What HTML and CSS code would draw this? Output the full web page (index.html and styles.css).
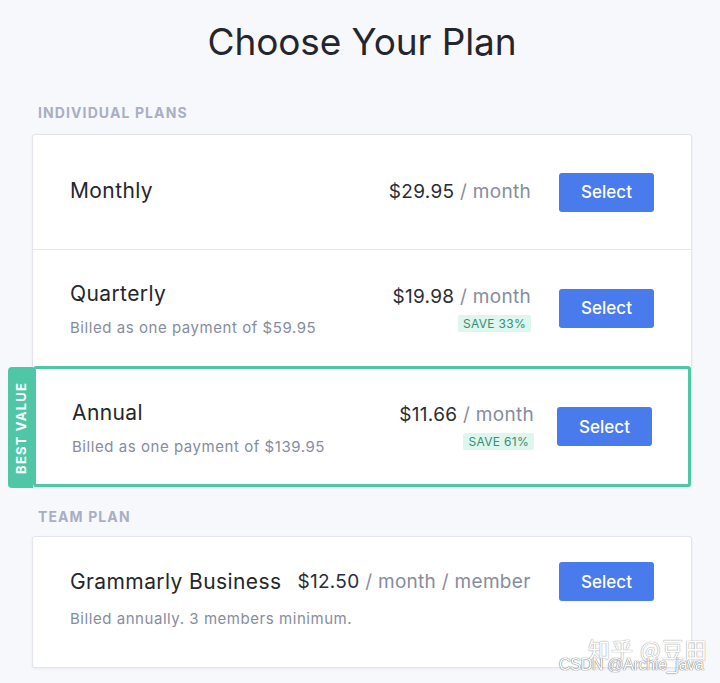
FILE: index.html
```html
<!DOCTYPE html>
<html lang="en">
<head>
<meta charset="utf-8">
<title>Choose Your Plan</title>
<link rel="stylesheet" href="styles.css">
</head>
<body>
<div class="page">
  <h1 class="title">Choose Your Plan</h1>

  <div class="section-label">INDIVIDUAL PLANS</div>
  <div class="card">
    <div class="row row-monthly">
      <div class="info">
        <div class="plan-name">Monthly</div>
      </div>
      <div class="price-col">
        <div class="price"><span class="amount">$29.95</span> <span class="unit">/ month</span></div>
      </div>
      <button class="select">Select</button>
    </div>
    <div class="row row-quarterly">
      <div class="info info-sub">
        <div class="plan-name">Quarterly</div>
        <div class="plan-sub">Billed as one payment of $59.95</div>
      </div>
      <div class="price-col">
        <div class="price"><span class="amount">$19.98</span> <span class="unit">/ month</span></div>
        <div class="badge">SAVE 33%</div>
      </div>
      <button class="select">Select</button>
    </div>
    <div class="row row-annual">
      <div class="best-tab"><span>BEST VALUE</span></div>
      <div class="info info-sub">
        <div class="plan-name">Annual</div>
        <div class="plan-sub">Billed as one payment of $139.95</div>
      </div>
      <div class="price-col">
        <div class="price"><span class="amount">$11.66</span> <span class="unit">/ month</span></div>
        <div class="badge">SAVE 61%</div>
      </div>
      <button class="select">Select</button>
    </div>
  </div>

  <div class="section-label team-label">TEAM PLAN</div>
  <div class="card team-card">
    <div class="team-top">
      <div class="plan-name">Grammarly Business</div>
      <div class="price team-price"><span class="amount">$12.50</span> <span class="unit">/ month / member</span></div>
      <button class="select">Select</button>
    </div>
    <div class="plan-sub team-sub">Billed annually. 3 members minimum.</div>
  </div>
</div>
<div class="wm-zhihu">知乎 @豆田</div>
<div class="wm-csdn">CSDN @Archie_java</div>
</body>
</html>
```

FILE: styles.css
```css
html, body {
  margin: 0;
  padding: 0;
}
body {
  background: #f7f8fc;
  font-family: "Inter", "Noto Sans", "Liberation Sans", sans-serif;
  color: #2a2d36;
  width: 720px;
  height: 683px;
  overflow: hidden;
  position: relative;
}
.page {
  width: 660px;
  margin-left: 32px;
  padding-top: 20px;
}
.title {
  margin: 0;
  text-align: center;
  font-weight: 400;
  font-size: 37px;
  line-height: 44px;
  letter-spacing: -0.1px;
  color: #24262d;
}
.section-label {
  margin: 40px 0 0 6px;
  font-size: 14px;
  font-weight: 700;
  letter-spacing: 1.1px;
  color: #a9aec2;
  line-height: 18px;
  height: 18px;
}
.card {
  margin-top: 12px;
  background: #fff;
  border: 1px solid #e3e5ec;
  border-radius: 3px;
  box-shadow: 0 1px 3px rgba(30, 40, 80, 0.06);
}
.row {
  display: flex;
  align-items: center;
  padding: 0 37px;
  box-sizing: border-box;
}
.row-monthly {
  height: 115px;
  border-bottom: 1px solid #e6e8ee;
}
.row-monthly .info {
  padding-bottom: 2px;
}
.row-quarterly {
  height: 116px;
}
.row-annual {
  position: relative;
  height: 121px;
  margin: 0 0 -1px 0;
  border: 3px solid #4fc7a6;
  border-radius: 3px;
  padding: 0 36px 0 36px;
}
.row-annual .select {
  margin-left: 23px;
}
.best-tab {
  position: absolute;
  left: -28px;
  top: -2px;
  width: 25px;
  height: 121px;
  background: #4fc7a6;
  border-radius: 4px 0 0 4px;
  display: flex;
  align-items: center;
  justify-content: center;
}
.best-tab span {
  writing-mode: vertical-rl;
  transform: rotate(180deg);
  color: #fff;
  font-size: 13px;
  font-weight: 700;
  letter-spacing: 1.2px;
}
.info {
  flex: 1;
}
.info-sub {
  padding-top: 3px;
}
.info-sub .plan-sub {
  margin-top: 11px;
}
.plan-name {
  font-size: 21px;
  line-height: 26px;
  color: #24262d;
  letter-spacing: 0.4px;
}
.plan-sub {
  margin-top: 14px;
  font-size: 15px;
  line-height: 20px;
  color: #868ca0;
  letter-spacing: 0.55px;
}
.price-col {
  display: flex;
  flex-direction: column;
  align-items: flex-end;
}
.price {
  font-size: 19px;
  line-height: 24px;
  white-space: nowrap;
  letter-spacing: 0.3px;
}
.amount {
  color: #2a2d36;
}
.unit {
  color: #878c9e;
}
.badge {
  margin-top: 6px;
  background: #ddf6ee;
  color: #3c8b73;
  font-size: 12px;
  line-height: 17px;
  padding: 0 5px;
  border-radius: 2px;
  letter-spacing: 0.3px;
}
.select {
  margin-left: 28px;
  width: 95px;
  height: 39px;
  border: none;
  border-radius: 3px;
  background: #4a7bec;
  color: #fff;
  font-family: "Inter", "Noto Sans", "Liberation Sans", sans-serif;
  font-size: 17px;
  font-weight: 500;
  padding: 0;
  cursor: pointer;
}
.team-label {
  margin-top: 21px;
}
.team-card {
  margin-top: 10px;
  padding: 25px 37px 38px 37px;
}
.team-top {
  display: flex;
  align-items: center;
}
.team-top .plan-name {
  flex: none;
}
.team-price {
  margin-left: 16px;
  flex: 1;
  letter-spacing: 0.3px;
}
.team-sub {
  margin-top: 8px;
}
.wm-zhihu {
  position: absolute;
  left: 588px;
  top: 636px;
  font-family: "Noto Sans CJK SC", sans-serif;
  font-size: 22px;
  line-height: 24px;
  color: #fff;
  text-shadow: 0 0 1px #999, 0 0 1px #999;
  letter-spacing: 1px;
}
.wm-csdn {
  position: absolute;
  left: 559px;
  top: 656px;
  font-family: "Liberation Sans", sans-serif;
  font-size: 16px;
  line-height: 18px;
  color: #fff;
  text-shadow: 0 0 1px #666, 0 0 1px #666;
  letter-spacing: -0.3px;
}
```
